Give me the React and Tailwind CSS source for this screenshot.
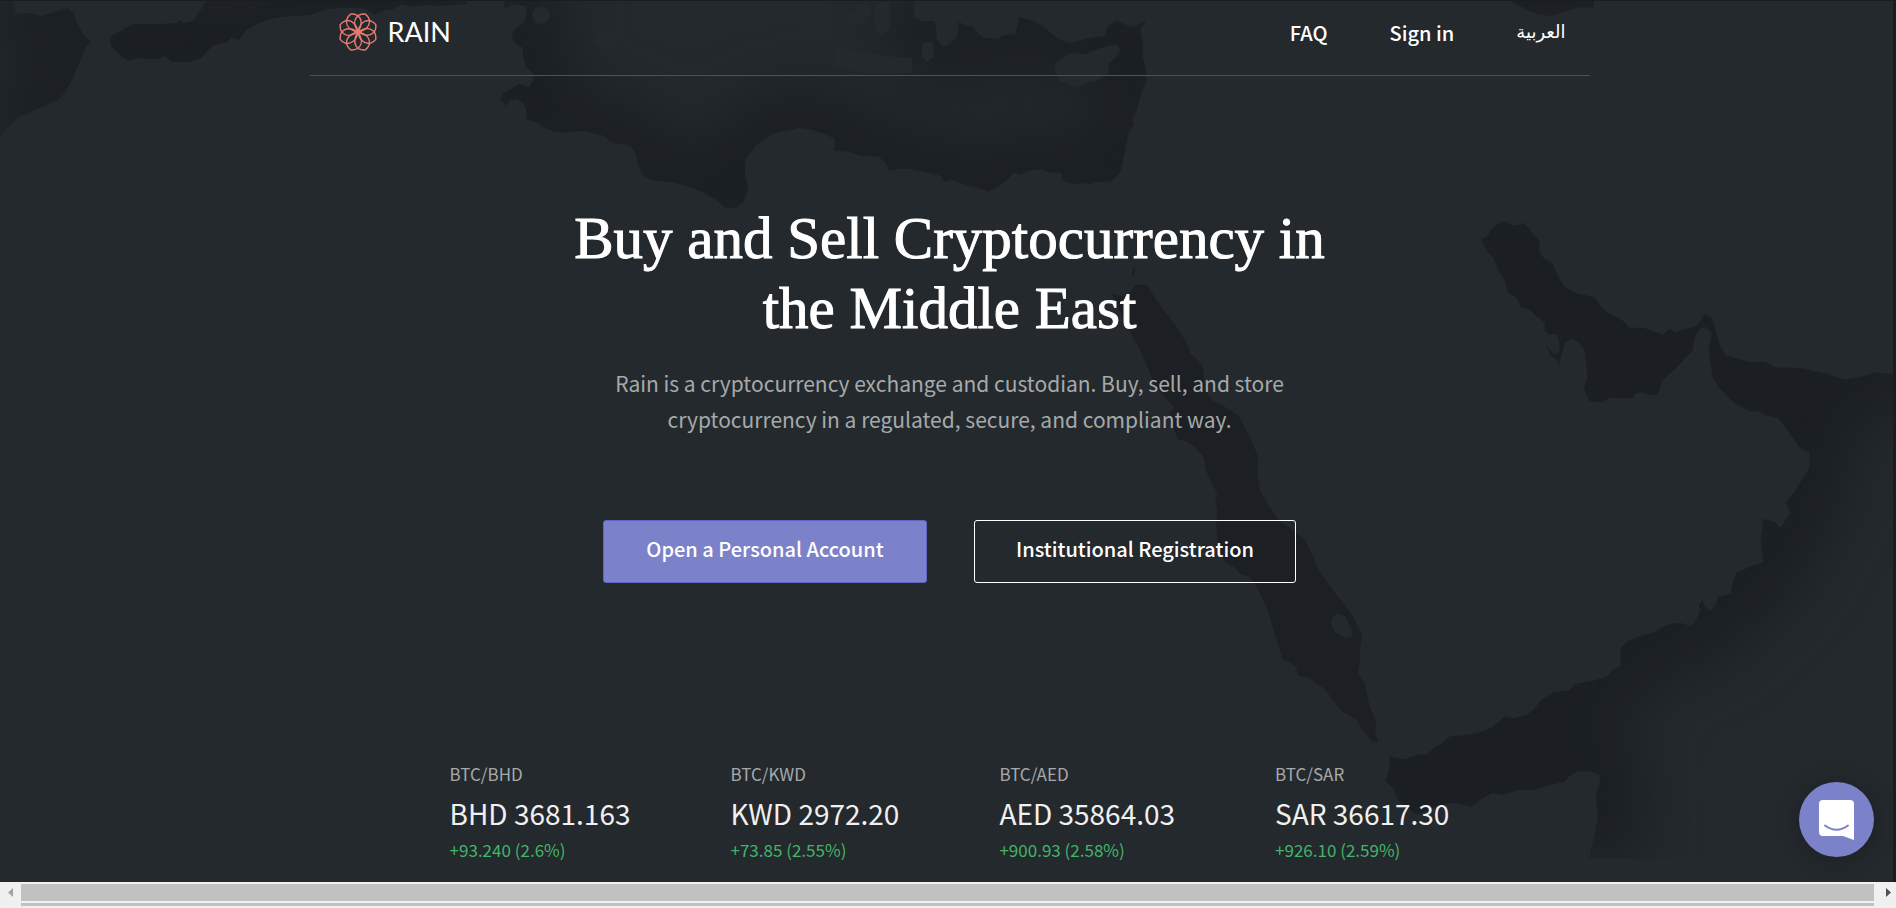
const sans = "font-['Noto_Sans_CJK_SC','Open_Sans',sans-serif]"

const prices = [
  { pair: 'BTC/BHD', price: 'BHD 3681.163', change: '+93.240 (2.6%)' },
  { pair: 'BTC/KWD', price: 'KWD 2972.20', change: '+73.85 (2.55%)' },
  { pair: 'BTC/AED', price: 'AED 35864.03', change: '+900.93 (2.58%)' },
  { pair: 'BTC/SAR', price: 'SAR 36617.30', change: '+926.10 (2.59%)' }
]

const atlantic = 'M0 137L18 117L38 108L60 98L67 89L73 78L87 45L92 41L85 35L77 22L75 13L69 7L60 9L52 12L42 15L30 12L16 13L14 0'

const alboran =
  'M206 0L202 8L193 20L184 22L181 19L177 22L160 23L133 23L121 30L113 34L110 38L112 46L117 50L122 56L129 60L138 57L149 58L158 58L165 55L173 61L189 61L202 57L208 50L214 45L222 42L226 42L232 37L240 39L246 30L258 23L270 18L282 16L310 14L325 9L339 7L359 7L367 8L375 14L386 9L395 8L403 3L412 6L427 4L440 5L468 3L468 0'

const mediterranean =
  'M504 0L506 8L514 3L526 5L528 12L526 20L514 30L513 36L516 42L524 47L524 55L527 66L534 72L534 80L530 86L520 83L512 88L504 92L501 98L507 105L511 99L518 98L524 102L527 107L527 118L540 123L548 128L556 131L570 132L584 130L595 133L605 135L611 141L617 143L625 143L632 146L636 150L640 167L645 175L652 179L676 182L690 186L701 190L717 199L727 208L737 207L745 201L750 187L748 180L746 173L747 158L757 145L766 138L777 132L788 130L801 127L813 129L825 133L836 138L836 150L850 151L862 155L880 156L886 161L891 170L900 168L910 168L926 171L942 175L946 181L953 179L967 184L980 187L989 191L998 187L1009 179L1015 172L1022 174L1033 169L1043 169L1053 172L1063 172L1064 180L1079 184L1085 182L1092 184L1098 181L1112 181L1122 172L1126 155L1130 133L1136 123L1134 119L1138 111L1143 93L1149 79L1147 66L1144 53L1145 43L1142 28L1149 18L1136 26L1128 24L1118 19L1110 25L1106 35L1091 37L1071 42L1062 39L1055 34L1047 27L1035 20L1021 16L1017 33L1006 34L998 38L987 37L980 33L975 26L967 24L960 21L959 36L950 44L944 46L938 38L938 30L936 20L922 20L916 15L915 0'

const arabianSea =
  'M1920 373L1896 373L1877 372L1865 376L1848 379L1838 376L1830 373L1818 371L1807 368L1793 367L1778 367L1767 361L1753 362L1740 358L1728 355L1723 346L1720 337L1717 325L1714 317L1707 313L1703 320L1697 326L1689 328L1678 332L1672 328L1665 334L1655 331L1647 327L1632 327L1623 318L1612 313L1604 307L1597 297L1587 294L1577 292L1566 285L1560 275L1555 263L1547 258L1543 253L1541 248L1542 240L1533 230L1526 222L1517 225L1511 223L1506 220L1499 224L1492 230L1490 235L1483 239L1489 250L1496 258L1500 269L1507 280L1510 292L1519 297L1523 307L1532 309L1538 315L1547 322L1547 330L1551 334L1559 334L1562 344L1561 352L1556 354L1548 344L1553 356L1558 358L1561 364L1565 350L1567 342L1575 338L1581 342L1587 350L1588 362L1590 377L1586 388L1592 401L1603 402L1613 397L1624 398L1635 398L1638 393L1645 392L1653 395L1660 394L1665 380L1678 368L1695 350L1697 337L1702 328L1708 326L1714 332L1711 350L1715 377L1722 388L1737 403L1753 411L1761 411L1768 415L1780 417L1790 430L1802 447L1812 452L1812 467L1804 480L1796 493L1788 502L1793 512L1783 527L1776 521L1766 518L1763 540L1766 562L1753 566L1739 572L1735 582L1733 593L1720 597L1718 605L1712 611L1706 605L1705 599L1701 605L1703 610L1698 620L1693 626L1685 623L1674 623L1666 626L1657 632L1644 635L1631 640L1623 647L1623 665L1616 669L1608 677L1592 681L1577 684L1571 690L1555 692L1543 700L1537 708L1530 714L1516 718L1507 716L1494 727L1479 733L1465 735L1452 736L1444 743L1436 748L1429 754L1421 754L1406 759L1391 756L1392 767L1387 781L1395 788L1400 800L1409 808L1418 815L1435 808L1452 803L1463 804L1473 807L1484 799L1494 793L1505 795L1521 790L1536 790L1552 785L1566 782L1572 776L1581 771L1592 771L1602 775L1602 785L1598 793L1600 817L1596 838L1591 859'

const redSea =
  'M1137 284L1148 284L1163 306L1177 324L1190 345L1192 353L1200 360L1205 367L1207 389L1215 401L1226 406L1240 415L1251 435L1260 456L1259 472L1262 490L1270 504L1280 519L1294 529L1307 539L1314 554L1320 569L1334 589L1347 605L1356 618L1364 635L1362 648L1362 661L1360 673L1367 684L1369 694L1372 707L1378 721L1377 731L1380 742L1374 741L1363 728L1360 721L1343 710L1335 700L1327 689L1318 683L1310 677L1300 676L1298 667L1291 661L1285 660L1277 635L1270 611L1260 589L1252 577L1243 574L1235 566L1227 562L1220 544L1218 528L1219 510L1217 501L1219 493L1208 471L1205 456L1196 446L1188 441L1180 439L1172 421L1171 412L1176 407L1165 395L1157 385L1149 366L1140 346L1129 327L1113 292L1122 295L1130 294Z'

const islands =
  'M782 0L785 15L797 20L805 30L814 32L822 38L830 37L832 28L829 0ZM834 52L840 44L858 51L872 52L886 55L914 57L913 72L874 73L856 69L838 66ZM924 42L934 40L936 56L928 61L923 55ZM1056 63L1062 58L1073 52L1087 53L1102 47L1118 43L1122 48L1118 56L1110 63L1111 72L1098 80L1090 81L1079 87L1061 80L1057 71ZM876 3L892 0L891 28L884 34L878 32L875 20ZM849 16L856 8L861 2L872 5L873 12L868 17L863 23L854 24ZM1334 617L1340 613L1347 616L1353 628L1355 636L1347 638L1336 631L1333 623Z'

function Sea({ id, coast, close, width = 90 }) {
  return (
    <g>
      <clipPath id={id}>
        <path d={coast + close} />
      </clipPath>
      <g clipPath={`url(#${id})`}>
        <path d={coast} fill="none" stroke="#1b1f23" strokeWidth={width} strokeLinejoin="round" filter="url(#shade)" />
      </g>
    </g>
  )
}

function MapBackground() {
  return (
    <svg
      aria-hidden="true"
      viewBox="0 0 1896 882"
      preserveAspectRatio="xMidYMin slice"
      className="absolute inset-0 h-full w-full"
    >
      <defs>
        <filter
          id="shade"
          filterUnits="userSpaceOnUse"
          colorInterpolationFilters="sRGB"
          x="-100"
          y="-100"
          width="2100"
          height="1100"
        >
          <feGaussianBlur stdDeviation="28" />
        </filter>
      </defs>
      <Sea id="atlantic" coast={atlantic} close="L0 0Z" width={70} />
      <Sea id="alboran" coast={alboran} close="Z" />
      <Sea id="mediterranean" coast={mediterranean} close="Z" width={80} />
      <Sea id="arabian" coast={arabianSea} close="L1691 859L1896 859L1896 373Z" />
      <path d={redSea} fill="#1c2024" />
      <path d="M1137 264L1134 270L1134 276L1137 270Z" fill="#1c2024" />
      <path d="M1513 0L1527 8L1540 13L1553 15L1568 10L1583 6L1596 7L1596 0Z" fill="#1c2024" />
      <path d={islands} fill="#24292d" />
      <circle cx="542" cy="14" r="9" fill="#24292d" />
      <circle cx="605" cy="38" r="10" fill="#24292d" />
    </svg>
  )
}

function Flower() {
  return (
    <svg viewBox="-20 -20 40 40" className="h-10 w-10" fill="none" stroke="#ea7c72" strokeWidth="1.4" aria-hidden="true">
      {[22.5, 67.5, 112.5, 157.5, 202.5, 247.5, 292.5, 337.5].map((angle) => (
        <path
          key={angle}
          transform={`rotate(${angle})`}
          d="M0 0C-6-4-9.500-10-5.500-16Q-3-18.500 0-19.300Q3-18.500 5.500-16C9.500-10 6-4 0 0Z"
        />
      ))}
    </svg>
  )
}

function Header() {
  return (
    <header className="mx-auto flex h-[76px] w-full max-w-[1280px] items-start justify-between border-b border-[#4d5255] pl-7 pr-6 pt-3">
      <a href="#home" className="flex items-center gap-[10px]">
        <Flower />
        <span className="font-['Lato',sans-serif] text-[27px] leading-10 text-white">RAIN</span>
      </a>
      <nav className={`flex gap-[62px] text-[20px] font-medium leading-[42px] text-white ${sans}`}>
        <a href="#faq">FAQ</a>
        <a href="#signin">Sign in</a>
        <a href="#ar" lang="ar" className="font-['DejaVu_Sans',sans-serif] text-[18px] font-normal leading-10">
          العربية
        </a>
      </nav>
    </header>
  )
}

function Scrollbar() {
  return (
    <div className="flex h-[26px] items-start justify-between bg-[#f0f0f0] pt-[2px]" aria-hidden="true">
      <div className="flex h-[17px] w-[21px] items-center justify-center">
        <svg viewBox="0 0 5 9" className="h-[9px] w-[5px]" fill="#a3a3a3">
          <path d="M5 0V9L0 4.500Z" />
        </svg>
      </div>
      <div className="flex flex-1 flex-col gap-[2px]">
        <div className="h-[17px] bg-[#c1c1c1]" />
        <div className="h-[3px] bg-[#c1c1c1]" />
      </div>
      <div className="flex h-[17px] w-[22px] items-center justify-end pr-[5px]">
        <svg viewBox="0 0 5 9" className="h-[9px] w-[5px]" fill="#505050">
          <path d="M0 0V9L5 4.500Z" />
        </svg>
      </div>
    </div>
  )
}

export default function App() {
  return (
    <div className="flex min-h-screen flex-col bg-[#24292d]">
      <div className="relative flex-1 overflow-hidden border-r-3 border-t border-[#1a1d20]">
        <MapBackground />
        <div className="relative -mt-px pl-[6px]">
          <Header />

          <main className="flex flex-col items-center">
            <h1 className="mt-[127px] max-w-[800px] text-center font-['Liberation_Serif',serif] text-[59px] font-normal leading-[70px] text-white [-webkit-text-stroke:1px_white]">
              Buy and Sell Cryptocurrency in the Middle East
            </h1>
            <p className={`mt-[22px] max-w-[680px] text-center text-[21px] leading-9 text-[#a6a9ab] ${sans}`}>
              Rain is a cryptocurrency exchange and custodian. Buy, sell, and store cryptocurrency in a regulated,
              secure, and compliant way.
            </p>
            <div className={`mt-[83px] flex gap-[47px] text-[20px] font-medium text-white ${sans}`}>
              <button className="h-[63px] w-[324px] rounded-[3px] border border-[#5c66c4] bg-[#7b82c9] pb-[6px]">
                Open a Personal Account
              </button>
              <button className="h-[63px] w-[322px] rounded-[3px] border border-white pb-[6px]">
                Institutional Registration
              </button>
            </div>

            <section className={`mt-[177px] flex gap-[100px] pb-4 ${sans}`}>
              {prices.map((item) => (
                <div key={item.pair}>
                  <p className="text-[17px] leading-7 text-[#a6a9ab]">{item.pair}</p>
                  <p className="text-[28px] leading-[50px] text-[#f0f0f0]">{item.price}</p>
                  <p className="text-[17px] leading-6 text-[#41b568]">{item.change}</p>
                </div>
              ))}
            </section>
          </main>
        </div>

        <button
          aria-label="Open chat"
          className="absolute bottom-[25px] right-[19px] flex h-[75px] w-[75px] items-center justify-center rounded-full bg-[#7b82c9] shadow-[0_2px_24px_rgba(0,0,0,0.25)]"
        >
          <svg viewBox="0 0 35 40" className="h-10 w-[35px]" aria-hidden="true">
            <path d="M4 0H31Q35 0 35 4V40L24 36H4Q0 36 0 32V4Q0 0 4 0Z" fill="#fff" />
            <path d="M6 25.500Q17.500 34 29 25.500" fill="none" stroke="#7b82c9" strokeWidth="2" strokeLinecap="round" />
          </svg>
        </button>
      </div>
      <Scrollbar />
    </div>
  )
}
